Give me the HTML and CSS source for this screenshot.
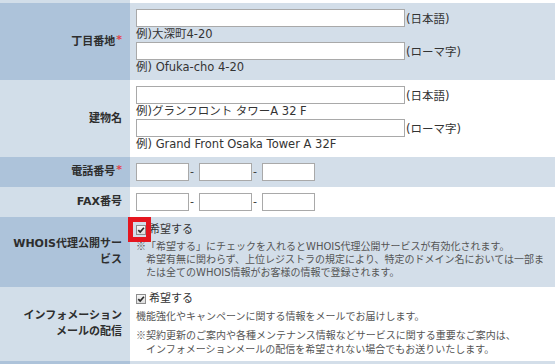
FILE: index.html
```html
<!DOCTYPE html>
<html lang="ja">
<head>
<meta charset="utf-8">
<title>登録情報</title>
<link rel="stylesheet" href="styles.css">
</head>
<body>
<div class="form">
  <div class="row even stub">
    <div class="label"></div>
    <div class="cell"></div>
  </div>

  <div class="row odd">
    <div class="label">丁目番地<span class="req">*</span></div>
    <div class="cell addr">
      <div class="field"><input class="text long" type="text"><span class="suffix">(日本語)</span></div>
      <div class="ex">例)大深町4-20</div>
      <div class="field"><input class="text long" type="text"><span class="suffix">(ローマ字)</span></div>
      <div class="ex">例) Ofuka-cho 4-20</div>
    </div>
  </div>

  <div class="row even">
    <div class="label">建物名</div>
    <div class="cell addr">
      <div class="field"><input class="text long" type="text"><span class="suffix">(日本語)</span></div>
      <div class="ex">例)グランフロント タワーA 32 F</div>
      <div class="field"><input class="text long" type="text"><span class="suffix">(ローマ字)</span></div>
      <div class="ex">例) Grand Front Osaka Tower A 32F</div>
    </div>
  </div>

  <div class="row odd">
    <div class="label">電話番号<span class="req">*</span></div>
    <div class="cell tel">
      <input class="text short" type="text"><span class="dash">-</span><input class="text short" type="text"><span class="dash">-</span><input class="text short" type="text">
    </div>
  </div>

  <div class="row even">
    <div class="label">FAX番号</div>
    <div class="cell tel">
      <input class="text short" type="text"><span class="dash">-</span><input class="text short" type="text"><span class="dash">-</span><input class="text short" type="text">
    </div>
  </div>

  <div class="row odd">
    <div class="label two">WHOIS代理公開サー<br>ビス</div>
    <div class="cell opt whois">
      <div class="check-line">
        <span class="cb">
          <svg viewBox="0 0 8 8" width="8" height="8"><path d="M1.3 4.2 L3.2 6.1 L6.9 1.8" fill="none" stroke="#2a2a2a" stroke-width="1.7"/></svg>
          <span class="highlight"></span>
        </span>
        <span class="check-text">希望する</span>
      </div>
      <p class="note hang"><span class="mark">※</span>「希望する」にチェックを入れるとWHOIS代理公開サービスが有効化されます。<br>希望有無に関わらず、上位レジストラの規定により、特定のドメイン名においては一部ま<br>たは全てのWHOIS情報がお客様の情報で登録されます。</p>
    </div>
  </div>

  <div class="row even">
    <div class="label two">インフォメーション<br>メールの配信</div>
    <div class="cell opt info">
      <div class="check-line">
        <span class="cb">
          <svg viewBox="0 0 8 8" width="8" height="8"><path d="M1.3 4.2 L3.2 6.1 L6.9 1.8" fill="none" stroke="#2a2a2a" stroke-width="1.7"/></svg>
        </span>
        <span class="check-text">希望する</span>
      </div>
      <p class="note lead">機能強化やキャンペーンに関する情報をメールでお届けします。</p>
      <p class="note hang wide"><span class="mark">※</span>契約更新のご案内や各種メンテナンス情報などサービスに関する重要なご案内は、<br>インフォメーションメールの配信を希望されない場合でもお送りいたします。</p>
    </div>
  </div>

  <div class="row odd tail">
    <div class="label"></div>
    <div class="cell"></div>
  </div>
</div>
</body>
</html>
```

FILE: styles.css
```css
html, body {
  margin: 0;
  padding: 0;
  background: #ffffff;
  overflow: hidden;
}

body {
  font-family: "DejaVu Sans", "Noto Sans CJK JP", sans-serif;
  color: #333333;
  width: 555px;
  height: 364px;
}

.form {
  display: flex;
  flex-direction: column;
}

.row {
  display: grid;
  grid-template-columns: 130px 1fr;
}

.row.odd .label { background: #adc3da; }
.row.odd .cell { background: #d3dee9; }
.row.even .label { background: #d2dee9; }
.row.even .cell { background: #ffffff; }

.row.stub { height: 3px; }
.row.tail { height: 40px; }

.label {
  display: flex;
  align-items: center;
  justify-content: flex-end;
  text-align: right;
  padding: 0 8px 0 4px;
  font-size: 11px;
  font-weight: bold;
  line-height: 16px;
  color: #2e2e2e;
  white-space: nowrap;
}

.req {
  color: #e0444c;
  font-size: 11px;
  font-weight: bold;
  position: relative;
  top: -2px;
  margin-left: 1px;
}

.cell {
  padding: 0 0 0 6px;
  min-width: 0;
}

.cell.addr {
  padding-top: 6px;
  padding-bottom: 5px;
}

.field {
  display: flex;
  align-items: center;
  height: 18px;
}

.text {
  box-sizing: border-box;
  height: 18px;
  margin: 0;
  padding: 0 2px;
  border: 1px solid #a9a9a9;
  background: #ffffff;
  font: inherit;
}

.text.long { width: 269px; }
.text.short { width: 53px; }

.suffix {
  font-size: 11.5px;
  margin-left: 1px;
  color: #333333;
  white-space: nowrap;
}

.ex {
  height: 15px;
  line-height: 15px;
  font-size: 11.5px;
  color: #333333;
  white-space: nowrap;
}

.cell.tel {
  display: flex;
  align-items: center;
  height: 30px;
}

.dash {
  width: 9px;
  font-size: 11px;
  padding-left: 1px;
  line-height: 18px;
}

.cell.opt {
  padding-right: 0;
  white-space: nowrap;
}

.cell.whois {
  padding-top: 4px;
  padding-bottom: 8px;
}

.cell.info {
  padding-top: 3px;
  padding-bottom: 4px;
}

.check-line {
  display: flex;
  align-items: center;
  height: 17px;
  gap: 2px;
}

.cb {
  position: relative;
  box-sizing: border-box;
  width: 10px;
  height: 10px;
  border: 1px solid #8e8e8e;
  background: linear-gradient(#f6f6f6, #dedede);
  display: flex;
  align-items: center;
  justify-content: center;
  flex: none;
}

.cb svg { display: block; }

.highlight {
  position: absolute;
  left: -9px;
  top: -9px;
  width: 23px;
  height: 25px;
  box-sizing: border-box;
  border: 5px solid #e5161f;
}

.check-text {
  font-size: 11px;
  line-height: 17px;
  color: #333333;
  margin-left: 1px;
}

.note {
  margin: 0;
  font-size: 10px;
  line-height: 13px;
  color: #555555;
}

.mark {
  font-family: "Noto Sans CJK JP", sans-serif;
}

.note.hang {
  padding-left: 10px;
  text-indent: -10px;
}

.whois .note { margin-top: 1px; }

.note.lead { margin-top: 3px; }

.note.wide {
  margin-top: 5px;
  line-height: 14px;
}
```
